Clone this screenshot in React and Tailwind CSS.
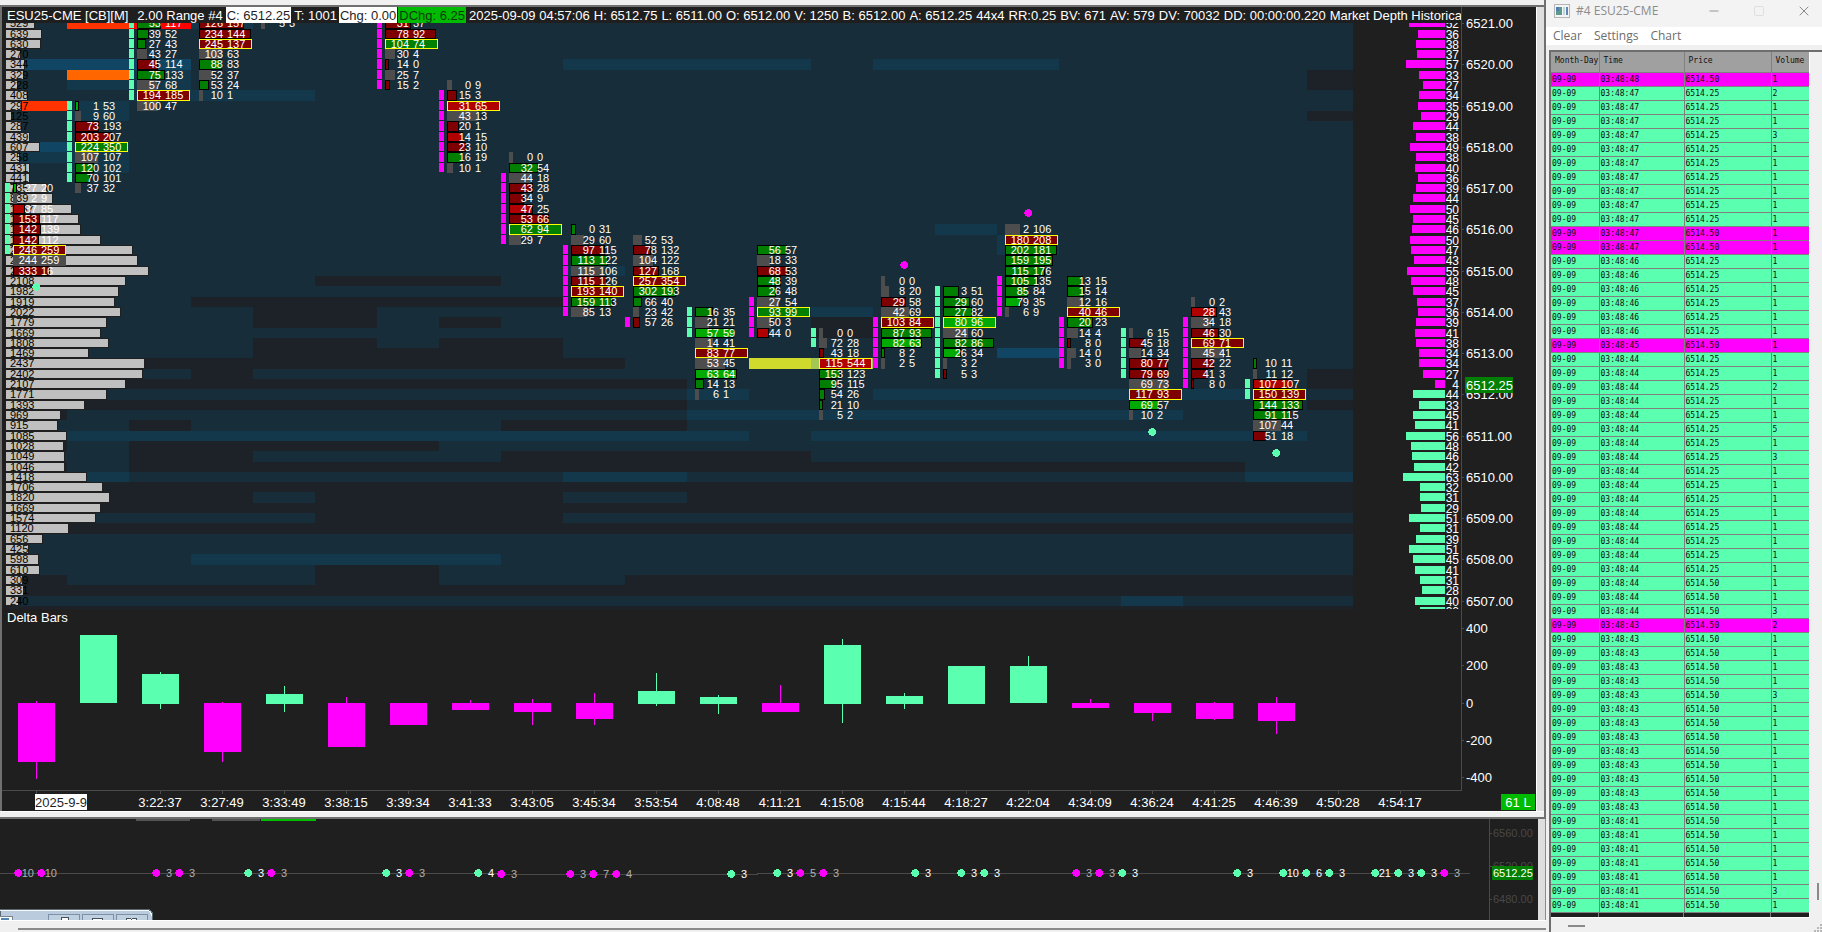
import React from 'react';
import { Minus, Square, X } from 'lucide-react';

const UP = '#5affaf';
const DOWN = '#ff00ff';

const ROW_TOP = 18.2;
const ROW_STEP = 10.31;
const COL_LEFT = 5;
const COL_STEP = 62;
const HEAT_RIGHT = 1353;

const rowY = (k) => Math.round(ROW_TOP + ROW_STEP * k);
const rowH = (k) => rowY(k + 1) - rowY(k);
const colX = (i) => COL_LEFT + COL_STEP * i;

const HEAT_COLORS = {
    d: '#1c2228',
    b: '#172d39',
    l: '#13384b',
    h: '#104564',
    r: '#ff0000',
    o: '#ff3300',
    a: '#ff6600',
    y: '#d0da2c',
    v: '#a2c853',
};

// [row, first column, last column, colour key]
const HEAT = [
    [0, 1, 1, 'o'], [0, 2, 2, 'r'], [0, 3, 3, 'l'],
    [4, 0, 2, 'h'], [4, 9, 12, 'l'], [4, 14, 16, 'l'],
    [5, 1, 1, 'a'], [5, 2, 2, 'l'], [5, 21, 21, 'd'],
    [6, 1, 2, 'l'], [6, 21, 21, 'd'], [7, 2, 4, 'l'],
    [8, 0, 0, 'o'], [8, 1, 1, 'l'], [9, 1, 1, 'l'], [9, 21, 21, 'd'],
    [12, 0, 0, 'h'], [12, 1, 1, 'l'], [13, 0, 1, 'l'], [14, 1, 1, 'l'],
    [20, 15, 15, 'l'], [21, 16, 16, 'l'], [22, 16, 16, 'l'], [24, 9, 9, 'l'],
    [25, 5, 7, 'd'], [27, 3, 8, 'd'],
    [28, 4, 5, 'd'], [28, 13, 13, 'l'],
    [29, 4, 5, 'd'], [29, 7, 7, 'd'], [29, 13, 13, 'd'], [30, 13, 13, 'd'],
    [31, 4, 5, 'd'], [31, 7, 8, 'd'],
    [32, 4, 8, 'd'], [32, 16, 16, 'h'],
    [33, 0, 9, 'd'], [33, 12, 12, 'y'], [33, 13, 13, 'v'],
    [34, 3, 3, 'd'], [34, 21, 21, 'd'],
    [35, 0, 10, 'd'], [35, 21, 21, 'd'],
    [36, 11, 11, 'l'], [36, 14, 20, 'l'],
    [37, 0, 10, 'd'], [37, 21, 21, 'd'],
    [38, 0, 0, 'd'], [38, 11, 18, 'l'],
    [39, 2, 2, 'd'], [39, 8, 10, 'd'],
    [40, 1, 11, 'l'], [40, 13, 20, 'l'],
    [41, 0, 0, 'd'], [41, 2, 6, 'd'],
    [42, 2, 3, 'd'], [42, 8, 12, 'd'],
    [43, 0, 0, 'd'], [43, 2, 19, 'd'],
    [44, 0, 1, 'l'], [44, 9, 10, 'l'], [44, 20, 21, 'l'],
    [45, 0, 21, 'd'],
    [46, 0, 21, 'd'], [46, 4, 4, 'b'], [46, 9, 10, 'b'],
    [47, 0, 21, 'd'], [48, 5, 8, 'd'], [49, 0, 21, 'd'],
    [52, 3, 7, 'l'], [53, 5, 6, 'd'],
    [54, 0, 0, 'd'], [54, 5, 6, 'd'], [54, 10, 21, 'd'],
    [55, 0, 21, 'd'], [56, 18, 18, 'l'], [57, 0, 21, 'd'],
];

const PROFILE = [
    529, 639, 630, 270, 344, 329, 228, 408, 297, 125, 287, 439, 607, 258, 431, 441,
    735, 839, 1167, 1290, 1320, 1670, 2230, 2312, 2502, 2108, 1982, 1919, 2022, 1779,
    1669, 1808, 1469, 2437, 2402, 2107, 1771, 1393, 969, 915, 1085, 1028, 1049, 1046,
    1418, 1706, 1820, 1669, 1574, 1120, 656, 425, 598, 610, 309, 331, 240,
];

// Resting orders next to the price scale; the first 36 rows are offers.
const ASK_ROWS = 36;
const DEPTH = [
    52, 36, 38, 37, 57, 33, 27, 34, 35, 29, 44, 38, 49, 38, 40, 36, 39, 44, 50, 45,
    46, 50, 47, 43, 55, 48, 45, 37, 36, 39, 41, 38, 34, 34, 27, 4,
    44, 33, 45, 41, 56, 48, 46, 42, 63, 32, 31, 29, 51, 31, 39, 51, 45, 41, 31, 28, 40, 32,
];

const CELL_COLORS = {
    g: '#007f00',
    G: '#00aa00',
    r: '#7f0000',
    R: '#b00000',
    n: '#4d4d4d',
};

const FULL = 53;

// cells: [colour key, bar width, bid, ask]; poc is the row outlined in yellow
const COLUMNS = [
    { i: 0, k: 16, body: [16, 22, UP], poc: 22, cells: [['G', 4, 27, 20], ['n', 4, 2, 9], ['R', 12, 37, 85], ['r', 27, 153, 117], ['r', 28, 142, 139], ['r', 26, 142, 112], ['r', FULL, 246, 259], ['n', FULL, 244, 259], ['r', 37, 333, 16]] },
    { i: 1, k: 8, body: [8, 15, UP], poc: 12, cells: [['G', 4, 1, 53], ['n', 6, 9, 60], ['r', 24, 73, 193], ['r', 37, 203, 207], ['g', FULL, 224, 350], ['n', 23, 107, 107], ['g', 19, 120, 102], ['g', 15, 70, 101], ['n', 6, 37, 32]] },
    { i: 2, k: 0, body: [0, 7, UP], poc: 7, cells: [['g', 24, 53, 117], ['g', 12, 39, 52], ['g', 9, 27, 43], ['n', 10, 43, 27], ['r', 21, 45, 114], ['g', 28, 75, 133], ['n', 20, 57, 68], ['r', FULL, 194, 185], ['n', 21, 100, 47]] },
    { i: 3, k: 0, poc: 2, cells: [['r', 45, 126, 157], ['r', 52, 234, 144], ['r', FULL, 245, 137], ['n', 23, 103, 63], ['g', 23, 88, 83], ['n', 12, 52, 37], ['g', 10, 53, 24], ['n', 4, 10, 1]] },
    { i: 4, k: 0, cells: [['n', 4, 5, 3]] },
    { i: 6, k: 0, body: [0, 6, DOWN], poc: 2, cells: [['r', 26, 31, 37], ['r', 51, 78, 92], ['g', FULL, 104, 74], ['n', 10, 30, 4], ['r', 4, 14, 0], ['n', 10, 25, 7], ['r', 5, 15, 2]] },
    { i: 7, k: 6, body: [7, 14, DOWN], poc: 8, cells: [['n', 5, 0, 9], ['r', 10, 15, 3], ['R', FULL, 31, 65], ['n', 31, 43, 13], ['r', 12, 20, 1], ['R', 16, 14, 15], ['r', 19, 23, 10], ['g', 16, 16, 19], ['n', 6, 10, 1]] },
    { i: 8, k: 13, body: [15, 21, DOWN], poc: 20, cells: [['n', 4, 0, 0], ['g', 29, 32, 54], ['n', 21, 44, 18], ['r', 24, 43, 28], ['r', 15, 34, 9], ['R', 24, 47, 25], ['r', 40, 53, 66], ['g', FULL, 62, 94], ['n', 12, 29, 7]] },
    { i: 9, k: 20, body: [22, 28, DOWN], poc: 26, cells: [['g', 5, 0, 31], ['n', 13, 29, 60], ['r', 34, 97, 115], ['g', 37, 113, 122], ['n', 33, 115, 106], ['r', 36, 115, 126], ['r', FULL, 193, 140], ['g', 42, 159, 113], ['n', 16, 85, 13]] },
    { i: 10, k: 21, body: [29, 29, DOWN], poc: 25, cells: [['n', 9, 52, 53], ['r', 18, 78, 132], ['n', 20, 104, 122], ['r', 26, 127, 168], ['r', FULL, 257, 354], ['g', 43, 302, 193], ['g', 9, 66, 40], ['n', 6, 23, 42], ['r', 7, 57, 26]] },
    { i: 11, k: 28, body: [28, 30, UP], poc: 32, cells: [['g', 18, 16, 35], ['n', 14, 21, 21], ['G', 39, 57, 59], ['n', 18, 14, 41], ['r', FULL, 83, 77], ['n', 30, 53, 45], ['G', 42, 63, 64], ['g', 9, 14, 13], ['n', 4, 6, 1]] },
    { i: 12, k: 22, body: [27, 30, DOWN], poc: 28, cells: [['g', 30, 56, 57], ['n', 13, 18, 33], ['r', 32, 68, 53], ['g', 24, 48, 39], ['g', 19, 26, 48], ['n', 22, 27, 54], ['g', FULL, 93, 99], ['n', 14, 50, 3], ['R', 12, 44, 0]] },
    { i: 13, k: 30, body: [30, 31, UP], poc: 33, cells: [['n', 4, 0, 0], ['n', 8, 72, 28], ['r', 5, 43, 18], ['R', FULL, 115, 544], ['g', 22, 153, 123], ['g', 17, 95, 115], ['g', 6, 54, 26], ['g', 4, 21, 10], ['n', 4, 5, 2]] },
    { i: 14, k: 25, body: [29, 33, DOWN], poc: 29, cells: [['n', 4, 0, 0], ['n', 8, 8, 20], ['r', 25, 29, 58], ['n', 28, 42, 69], ['r', FULL, 103, 84], ['g', 51, 87, 93], ['G', 41, 82, 63], ['g', 4, 8, 2], ['n', 4, 2, 5]] },
    { i: 15, k: 26, body: [26, 34, UP], poc: 29, cells: [['g', 16, 3, 51], ['g', 27, 29, 60], ['g', 29, 27, 82], ['G', FULL, 80, 96], ['n', 25, 24, 60], ['g', 51, 82, 86], ['G', 18, 26, 34], ['n', 4, 3, 2], ['r', 4, 5, 3]] },
    { i: 16, k: 20, body: [25, 28, DOWN], poc: 21, cells: [['n', 15, 2, 106], ['r', FULL, 180, 208], ['g', 52, 202, 181], ['g', 48, 159, 195], ['g', 40, 115, 176], ['g', 33, 105, 135], ['g', 23, 85, 84], ['G', 16, 79, 35], ['n', 4, 6, 9]] },
    { i: 17, k: 25, body: [29, 33, DOWN], poc: 28, cells: [['g', 16, 13, 15], ['g', 17, 15, 14], ['n', 16, 12, 16], ['r', FULL, 40, 46], ['g', 26, 20, 23], ['n', 11, 14, 4], ['r', 4, 8, 0], ['n', 9, 14, 0], ['n', 4, 3, 0]] },
    { i: 18, k: 30, body: [30, 34, UP], poc: 36, cells: [['n', 4, 6, 15], ['r', 16, 45, 18], ['n', 12, 14, 34], ['r', 39, 80, 77], ['r', 39, 79, 69], ['n', 38, 69, 73], ['r', FULL, 117, 93], ['G', 30, 69, 57], ['n', 4, 10, 2]] },
    { i: 19, k: 27, body: [29, 35, DOWN], poc: 31, cells: [['n', 4, 0, 2], ['R', 26, 28, 43], ['n', 20, 34, 18], ['r', 28, 46, 30], ['r', FULL, 69, 71], ['n', 33, 45, 41], ['r', 23, 42, 22], ['r', 17, 41, 3], ['r', 3, 8, 0]] },
    { i: 20, k: 33, body: [35, 36, UP], poc: 36, cells: [['g', 4, 10, 11], ['n', 4, 11, 12], ['R', 39, 107, 107], ['r', FULL, 150, 139], ['g', 50, 144, 133], ['g', 38, 91, 115], ['n', 28, 107, 44], ['r', 13, 51, 18]] },
];

const SIGNALS = [
    [36, 287, UP],
    [904, 265, DOWN],
    [1028, 213, DOWN],
    [1152, 432, UP],
    [1276, 453, UP],
];

// [column, body top, body bottom, wick top, wick bottom, colour]
const DELTA = [
    [0, 703, 762, 701, 779, DOWN],
    [1, 635, 703, 635, 703, UP],
    [2, 674, 704, 672, 709, UP],
    [3, 703, 752, 702, 762, DOWN],
    [4, 694, 704, 686, 712, UP],
    [5, 703, 747, 697, 747, DOWN],
    [6, 703, 725, 703, 725, DOWN],
    [7, 703, 710, 700, 710, DOWN],
    [8, 703, 712, 699, 725, DOWN],
    [9, 703, 719, 693, 725, DOWN],
    [10, 691, 704, 673, 706, UP],
    [11, 697, 704, 695, 714, UP],
    [12, 703, 712, 685, 712, DOWN],
    [13, 645, 704, 639, 723, UP],
    [14, 696, 704, 693, 709, UP],
    [15, 666, 704, 666, 704, UP],
    [16, 666, 703, 656, 703, UP],
    [17, 703, 708, 699, 708, DOWN],
    [18, 703, 713, 703, 721, DOWN],
    [19, 703, 719, 702, 720, DOWN],
    [20, 703, 721, 697, 734, DOWN],
];

const TIMES = [
    '3:22:37', '3:27:49', '3:33:49', '3:38:15', '3:39:34', '3:41:33', '3:43:05',
    '3:45:34', '3:53:54', '4:08:48', '4:11:21', '4:15:08', '4:15:44', '4:18:27',
    '4:22:04', '4:34:09', '4:36:24', '4:41:25', '4:46:39', '4:50:28', '4:54:17',
];

const FIELDS = [
    '2025-09-09 04:57:06', 'H: 6512.75', 'L: 6511.00', 'O: 6512.00', 'V: 1250',
    'B: 6512.00', 'A: 6512.25', '44x4', 'RR:0.25', 'BV: 671', 'AV: 579',
    'DV: 70032', 'DD: 00:00:00.220', 'Market Depth Historica',
];

// [x, y, colour, size]
const TRADES = [
    [18, 873, DOWN, 10], [41, 873, DOWN, 10], [156, 873, DOWN, 3], [179, 873, DOWN, 3],
    [248, 873, UP, 3], [271, 873, DOWN, 3], [386, 873, UP, 3], [409, 873, DOWN, 3],
    [478, 873, UP, 4], [501, 874, DOWN, 3], [570, 874, DOWN, 3], [593, 874, DOWN, 7],
    [616, 874, DOWN, 4], [731, 874, UP, 3], [777, 873, UP, 3], [800, 873, DOWN, 5],
    [823, 873, DOWN, 3], [915, 873, UP, 3], [961, 873, UP, 3], [984, 873, UP, 3],
    [1076, 873, DOWN, 3], [1099, 873, DOWN, 3], [1122, 873, UP, 3], [1237, 873, UP, 3],
    [1283, 873, UP, 10], [1306, 873, UP, 6], [1329, 873, UP, 3], [1375, 873, UP, 21],
    [1398, 873, UP, 3], [1421, 873, UP, 3], [1444, 873, DOWN, 3],
];

const repeat = (n, row) => Array.from({ length: n }, () => row);

// [time, price, volume, colour]
const TAPE = [
    ['03:48:48', '6514.50', 1, DOWN],
    ['03:48:47', '6514.25', 2, UP],
    ...repeat(2, ['03:48:47', '6514.25', 1, UP]),
    ['03:48:47', '6514.25', 3, UP],
    ...repeat(6, ['03:48:47', '6514.25', 1, UP]),
    ...repeat(2, ['03:48:47', '6514.50', 1, DOWN]),
    ...repeat(6, ['03:48:46', '6514.25', 1, UP]),
    ['03:48:45', '6514.50', 1, DOWN],
    ...repeat(2, ['03:48:44', '6514.25', 1, UP]),
    ['03:48:44', '6514.25', 2, UP],
    ...repeat(2, ['03:48:44', '6514.25', 1, UP]),
    ['03:48:44', '6514.25', 5, UP],
    ['03:48:44', '6514.25', 1, UP],
    ['03:48:44', '6514.25', 3, UP],
    ...repeat(8, ['03:48:44', '6514.25', 1, UP]),
    ...repeat(2, ['03:48:44', '6514.50', 1, UP]),
    ['03:48:44', '6514.50', 3, UP],
    ['03:48:43', '6514.50', 2, DOWN],
    ...repeat(4, ['03:48:43', '6514.50', 1, UP]),
    ['03:48:43', '6514.50', 3, UP],
    ...repeat(8, ['03:48:43', '6514.50', 1, UP]),
    ...repeat(5, ['03:48:41', '6514.50', 1, UP]),
    ['03:48:41', '6514.50', 3, UP],
    ['03:48:41', '6514.50', 1, UP],
];

const Dot = ({ x, y, color }) => (
    <path d={`M${x - 1} ${y - 4}h2l1 1h1v1l1 1v2l-1 1v1h-1l-1 1h-2l-1-1h-1v-1l-1-1v-2l1-1v-1h1z`} fill={color} />
);

const ChartHeader = () => (
    <div className="flex h-4 overflow-hidden whitespace-pre pl-[5px] text-[13px] leading-[17px] text-white">
        <span>ESU25-CME [CB][M]</span>
        <span className="ml-[9px]">2.00 Range #4</span>
        <span className="ml-[3px] bg-white px-px text-[#1f1f1f]">C: 6512.25</span>
        <span className="ml-[3px]">T: 1001</span>
        <span className="ml-0.5 bg-white px-px text-[#1f1f1f]">Chg: 0.00</span>
        <span className="ml-px bg-[#00bc00] px-px text-[#0c3a0c]">DChg: 6.25</span>
        <div className="ml-[3px] flex gap-1">
            {FIELDS.map((f) => <span key={f}>{f}</span>)}
        </div>
    </div>
);

const FootprintChart = () => (
    <svg className="block h-[586px] w-full text-[11px]" shapeRendering="crispEdges">
        <g transform="translate(-2 -23)">
            <rect x="6" y="23" width={HEAT_RIGHT - 6} height="585" fill={HEAT_COLORS.b} />
            {HEAT.map(([k, from, to, c], n) => {
                const x = Math.max(6, colX(from));
                const right = Math.min(HEAT_RIGHT, colX(to + 1));
                return <rect key={n} x={x} y={rowY(k)} width={right - x} height={rowH(k)} fill={HEAT_COLORS[c]} />;
            })}

            {/* volume by price */}
            {PROFILE.map((v, k) => (
                <g key={k}>
                    <rect x="5.5" y={rowY(k) + 0.5} width={Math.round(v * 0.0575 - 2) + 1} height={rowH(k) - 1} fill="#c0c0c0" stroke="#1f1f1f" />
                    <text x="10" y={rowY(k) + 9} fill="#000">{v}</text>
                </g>
            ))}

            {COLUMNS.map(({ i, k: start, body, poc, cells }) => {
                const x = colX(i) + 8;
                return (
                    <g key={i}>
                        {body && Array.from({ length: body[1] - body[0] + 1 }, (_, n) => body[0] + n).map((k) => (
                            <rect key={k} x={colX(i)} y={rowY(k)} width="5" height={rowH(k) - 1} fill={body[2]} />
                        ))}
                        {cells.map(([c, w, bid, ask], n) => {
                            const k = start + n;
                            const y = rowY(k);
                            const h = rowH(k);
                            return (
                                <g key={k}>
                                    {c === 'n' ? (
                                        <rect x={x} y={y} width={w} height={h} fill={CELL_COLORS.n} />
                                    ) : (
                                        <rect x={x + 0.5} y={y + 0.5} width={w - 1} height={h - 1} fill={CELL_COLORS[c]} stroke={k === poc ? '#ffff00' : '#000'} />
                                    )}
                                    <text x={x + 24} y={y + 9} fill="#fff" textAnchor="end">{bid}</text>
                                    <text x={x + 28} y={y + 9} fill="#fff">{ask}</text>
                                </g>
                            );
                        })}
                    </g>
                );
            })}

            {SIGNALS.map(([x, y, c]) => <Dot key={x} x={x} y={y} color={c} />)}

            {DEPTH.map((v, k) => {
                const w = Math.round(7.5 + v * 0.555);
                return (
                    <g key={k}>
                        <rect x={1445 - w} y={rowY(k) + 1} width={w} height="8" fill={k < ASK_ROWS ? DOWN : UP} />
                        <text x="1459" y={rowY(k) + 10} fill="#fff" fontSize="12" textAnchor="end">{v}</text>
                    </g>
                );
            })}
        </g>
    </svg>
);

const DeltaChart = () => (
    <svg className="block h-[202px] w-full text-[13px]" shapeRendering="crispEdges">
        <g transform="translate(-2 -609)">
            <text x="7" y="622" fill="#fff">Delta Bars</text>
            {DELTA.map(([i, top, bottom, high, low, c]) => (
                <g key={i} fill={c}>
                    <rect x={18 + COL_STEP * i} y={top} width="37" height={bottom - top} />
                    <rect x={36 + COL_STEP * i} y={high} width="1" height={low - high} />
                </g>
            ))}
            <rect x="2" y="790" width="1460" height="1" fill="#4a4a4a" />
            <rect x="36" y="791" width="1" height="3" fill="#4a4a4a" />
            <rect x="35" y="794" width="52" height="16" fill="#fff" />
            <text x="61" y="807" fill="#1f1f1f" textAnchor="middle">2025-9-9</text>
            {TIMES.map((t, n) => {
                const x = 36 + COL_STEP * (n + 2);
                return (
                    <g key={t}>
                        <rect x={x} y="791" width="1" height="3" fill="#4a4a4a" />
                        <text x={x} y="807" fill="#fff" textAnchor="middle">{t}</text>
                    </g>
                );
            })}
        </g>
    </svg>
);

const PriceAxis = () => (
    <svg className="block h-[804px] w-[75px] shrink-0 text-[13px]" shapeRendering="crispEdges">
        <g transform="translate(-1461 -7)">
            <rect x="1461" y="7" width="1" height="784" fill="#4a4a4a" />
            {Array.from({ length: 15 }, (_, n) => {
                const y = rowY(n * 4) + 5;
                return (
                    <g key={n}>
                        <rect x="1462" y={y} width="2" height="1" fill="#4a4a4a" />
                        <text x="1466" y={y + 5} fill="#fff">{`${6521 - n}.00`}</text>
                    </g>
                );
            })}
            <rect x="1465" y="377" width="48" height="16" fill="#007f00" />
            <text x="1466" y="390" fill="#fff">6512.25</text>
            {[400, 200, 0, -200, -400].map((v) => {
                const y = Math.floor(703 - v * 0.187);
                return (
                    <g key={v}>
                        <rect x="1462" y={y} width="2" height="1" fill="#4a4a4a" />
                        <text x="1466" y={y + 5} fill="#fff">{v}</text>
                    </g>
                );
            })}
            <rect x="1501" y="794" width="34" height="16" fill="#00bc00" />
            <text x="1518" y="807" fill="#fff" textAnchor="middle">61 L</text>
        </g>
    </svg>
);

const TradesStrip = () => (
    <div className="relative flex h-[101px] bg-[#1f1f1f]">
        <svg className="block h-full min-w-0 flex-1 text-[11px]" shapeRendering="crispEdges">
            <g transform="translate(0 -819)">
                <rect x="136" y="819" width="54" height="2" fill="#555" />
                <rect x="212" y="819" width="48" height="2" fill="#555" />
                <rect x="261" y="819" width="55" height="2" fill="#00c000" />
                <path d="M0 873.5H497V874.5H757V873.5H1470" fill="none" stroke="#4a4a4a" />
                {TRADES.map(([x, y, c, size]) => (
                    <g key={x}>
                        <Dot x={x} y={y} color={c} />
                        <text x={x + 16} y={y + 4} fill={c === UP ? '#fff' : '#b0b0b0'} textAnchor="end">{size}</text>
                    </g>
                ))}
                {/* top of a minimised child window */}
                <path d="M0 909.5H147Q152.500 909.5 152.500 915V921H0Z" fill="#b9cbdc" stroke="#5c6670" />
                <path d="M0 910.5H147Q151.500 911 151.500 916" fill="none" stroke="#f4f8fb" />
                <rect x="-1" y="916.5" width="13.500" height="6" fill="#fff" stroke="#77828e" />
                <rect x="1" y="918" width="8" height="3" fill="#4f86b5" />
                {[48.5, 82.5, 116.5].map((x) => (
                    <rect key={x} x={x} y="914.5" width="31" height="10" rx="1" fill="#bfd0e0" stroke="#7d90a8" />
                ))}
                <rect x="61.500" y="917.5" width="7" height="6" fill="#fff" stroke="#44505e" />
                <rect x="92.500" y="918.5" width="10" height="6" fill="#fff" stroke="#44505e" />
                <path d="M126.500 921V918.5H130.500L131.500 920L132.500 918.5H136.500V921" fill="#fff" stroke="#44505e" />
            </g>
        </svg>
        <svg className="block h-full w-[49px] shrink-0 text-[11px]" shapeRendering="crispEdges">
            <g transform="translate(-1489 -819)">
                <rect x="1489" y="819" width="1" height="101" fill="#4a4a4a" />
                {[[833, '6560.00'], [866, '6520.00'], [899, '6480.00']].map(([y, t]) => (
                    <g key={t} fill="#484848">
                        <rect x="1490" y={y} width="2" height="1" />
                        <text x="1493" y={y + 4}>{t}</text>
                    </g>
                ))}
                <rect x="1492" y="866" width="41" height="14" fill="#007f00" />
                <text x="1493" y="877" fill="#fff">6512.25</text>
            </g>
        </svg>
    </div>
);

const TapeWindow = () => (
    <section className="flex w-[276px] shrink-0 flex-col bg-[#f0f0f0] font-['Open_Sans','Noto_Sans',sans-serif] text-xs">
        <header className="flex h-[27px] items-start bg-[#f3f3f3] pl-2 text-[#8c8c8c]">
            <svg className="mt-1 h-[14px] w-4" viewBox="0 0 16 14" shapeRendering="crispEdges">
                <rect x="0.500" y="0.500" width="15" height="13" fill="#f4f4f4" stroke="#b5b5b5" />
                <rect x="2" y="3" width="6" height="8" fill="#5a9a8e" />
                <rect x="2" y="3" width="3" height="4" fill="#4f7fae" />
                <rect x="9" y="3" width="2" height="8" fill="#c9d3dc" />
                <rect x="12" y="3" width="2" height="8" fill="#5b87b3" />
            </svg>
            <h1 className="ml-1.5 flex-1 whitespace-nowrap leading-[22px]">#4 ESU25-CME</h1>
            <div className="-mr-1 flex h-[22px] items-center">
                <button type="button" aria-label="Minimize" className="flex w-[45px] justify-center text-[#8a8a8a]">
                    <Minus size={14} strokeWidth={1.5} />
                </button>
                <button type="button" aria-label="Maximize" disabled className="flex w-[45px] justify-center text-[#dedede]">
                    <Square size={12} strokeWidth={2} />
                </button>
                <button type="button" aria-label="Close" className="flex w-[45px] justify-center text-[#8a8a8a]">
                    <X size={16} strokeWidth={1.5} />
                </button>
            </div>
        </header>
        <nav className="flex h-[18px] items-center gap-3 bg-white pl-[7px] leading-5 text-[#6d6d6d]">
            <button type="button">Clear</button>
            <button type="button">Settings</button>
            <button type="button">Chart</button>
        </nav>
        <div className="ml-[3px] mt-[5px] flex flex-1 border-l-2 border-t-2 border-[#6e6e6e]">
            <div className="flex min-w-0 flex-1 flex-col">
                <div className="border-b border-r border-white bg-[#1f1f1f]">
                    <table className="w-full table-fixed border-collapse text-left font-['DejaVu_Sans_Mono',monospace] text-[8px] text-[#101010]">
                        <colgroup>
                            <col className="w-12" />
                            <col className="w-[85px]" />
                            <col className="w-[87px]" />
                            <col />
                        </colgroup>
                        <thead>
                            <tr className="h-5 bg-[#a0a0a0]">
                                {['Month-Day', 'Time', 'Price', 'Volume'].map((h) => (
                                    <th key={h} className="overflow-hidden whitespace-nowrap border-b border-r border-[#808080] p-0 pl-1 font-normal last:border-r-0">{h}</th>
                                ))}
                            </tr>
                        </thead>
                        <tbody>
                            {TAPE.map(([time, price, volume, color], n) => (
                                <tr key={n} className={color === UP ? 'h-[14px] bg-[#5affaf]' : 'h-[14px] bg-[#ff00ff]'}>
                                    {['09-09', time, price, volume].map((v, c) => (
                                        <td key={c} className="border-b border-r border-[#808080] p-0 pl-px leading-[13px] last:border-r-0">{v}</td>
                                    ))}
                                </tr>
                            ))}
                        </tbody>
                    </table>
                    <div className="flex h-1">
                        <div className="w-12 border-r border-[#808080]" />
                        <div className="w-[85px] border-r border-[#808080]" />
                        <div className="w-[87px] border-r border-[#808080]" />
                    </div>
                </div>
                <div className="ml-[17px] mt-[7px] h-0.5 w-[17px] bg-[#8a8a8a]" />
            </div>
            <div className="flex w-3 flex-col items-center justify-end">
                <div className="ml-1 h-[17px] w-0.5 bg-[#8a8a8a]" />
                <svg className="mt-6 h-2 w-2 self-end" viewBox="0 0 8 8" fill="#b8b8b8" shapeRendering="crispEdges">
                    <path d="M6 0h2v2H6zM3 3h2v2H3zM6 3h2v2H6zM0 6h2v2H0zM3 6h2v2H3zM6 6h2v2H6z" />
                </svg>
            </div>
        </div>
    </section>
);

export default function App() {
    return (
        <main className="flex min-h-screen w-full overflow-hidden bg-[#f0f0f0] font-['Liberation_Sans',Arial,sans-serif]">
            <div className="flex min-w-0 flex-1 flex-col">
                <section className="border-b-2 border-r-2 border-[#707070] bg-[#f0f0f0] pt-[5px]">
                    <div className="flex border-l-2 border-t-2 border-[#707070]">
                        <div className="flex min-w-0 flex-1 bg-[#1f1f1f]">
                            <div className="min-w-0 flex-1">
                                <ChartHeader />
                                <FootprintChart />
                                <DeltaChart />
                            </div>
                            <PriceAxis />
                        </div>
                        <div className="w-2 border-l border-white bg-[#dedede]" />
                    </div>
                    <div className="h-1.5 border-t border-white" />
                </section>
                <section className="flex flex-1 flex-col bg-[#f0f0f0]">
                    <div className="flex border-r border-[#8a8a8a]">
                        <div className="min-w-0 flex-1">
                            <TradesStrip />
                        </div>
                        <div className="w-[7px] bg-[#dedede]" />
                    </div>
                    <div className="h-2 border-t border-white" />
                    <div className="ml-[18px] h-0.5 bg-[#8a8a8a]" />
                </section>
            </div>
            <TapeWindow />
        </main>
    );
}
